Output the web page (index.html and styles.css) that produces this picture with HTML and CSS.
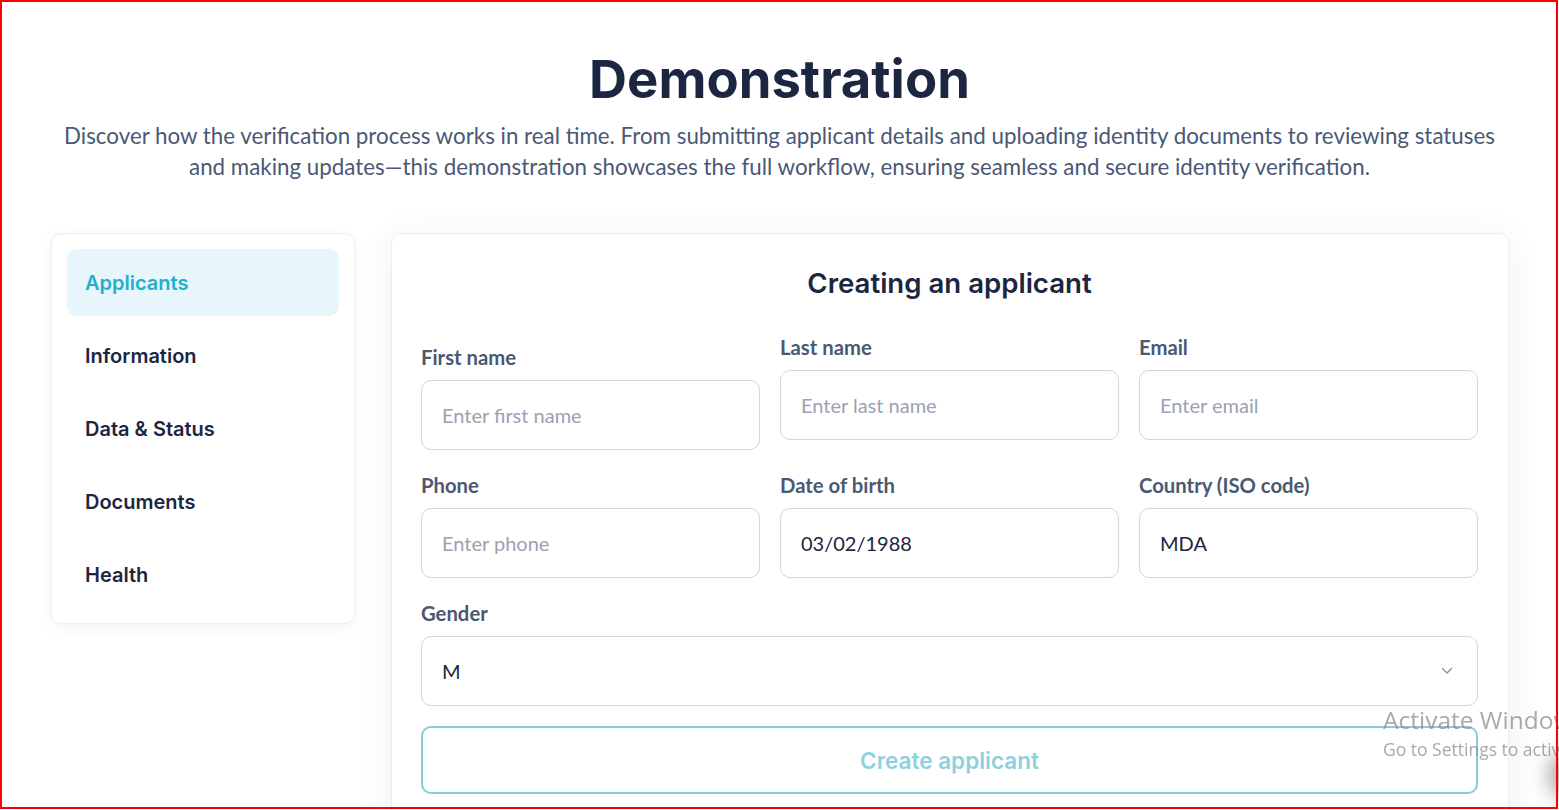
FILE: index.html
```html
<!DOCTYPE html>
<html lang="en">
<head>
<meta charset="utf-8">
<title>Demonstration</title>
<link rel="stylesheet" href="styles.css">
</head>
<body>
<header class="hero">
  <h1 class="hero-title">Demonstration</h1>
  <p class="hero-text">Discover how the verification process works in real time. From submitting applicant details and uploading identity documents to reviewing statuses and making updates—this demonstration showcases the full workflow, ensuring seamless and secure identity verification.</p>
</header>

<main class="demo">
  <nav class="side">
    <a class="side-item active">Applicants</a>
    <a class="side-item">Information</a>
    <a class="side-item">Data &amp; Status</a>
    <a class="side-item">Documents</a>
    <a class="side-item">Health</a>
  </nav>

  <section class="panel">
    <h2 class="panel-title">Creating an applicant</h2>
    <form class="form">
      <div class="field first">
        <label class="label">First name</label>
        <input class="input" type="text" placeholder="Enter first name">
      </div>
      <div class="field">
        <label class="label">Last name</label>
        <input class="input" type="text" placeholder="Enter last name">
      </div>
      <div class="field">
        <label class="label">Email</label>
        <input class="input" type="text" placeholder="Enter email">
      </div>
      <div class="field">
        <label class="label">Phone</label>
        <input class="input" type="text" placeholder="Enter phone">
      </div>
      <div class="field">
        <label class="label">Date of birth</label>
        <input class="input" type="text" value="03/02/1988">
      </div>
      <div class="field">
        <label class="label">Country (ISO code)</label>
        <input class="input" type="text" value="MDA">
      </div>
      <div class="field wide">
        <label class="label">Gender</label>
        <div class="select-wrap">
          <select class="input select">
            <option>M</option>
            <option>F</option>
          </select>
          <svg class="chevron" width="12" height="8" viewBox="0 0 12 8"><path d="M1.5 1.5 L6 6 L10.5 1.5" fill="none" stroke="#8a8f99" stroke-width="1.4" stroke-linecap="round" stroke-linejoin="round"/></svg>
        </div>
      </div>
      <button class="submit" type="button">Create applicant</button>
    </form>
  </section>
</main>

<div class="watermark">
  <div class="wm-title">Activate Windows</div>
  <div class="wm-sub">Go to Settings to activate Windows.</div>
</div>
<div class="corner-blob"></div>
<div class="frame"></div>
</body>
</html>
```

FILE: styles.css
```css
* { box-sizing: border-box; }

html, body {
  margin: 0;
  background: #ffffff;
  overflow: hidden;
}

body {
  font-family: "Lato", "Liberation Sans", sans-serif;
  color: #1c2640;
  height: 810px;
}

.hero {
  padding: 48px 30px 0;
  text-align: center;
}

.hero-title {
  margin: 0;
  font-family: "Inter", "Liberation Sans", sans-serif;
  font-weight: 700;
  font-size: 52.6px;
  line-height: 62px;
  color: #1c2640;
}

.hero-text {
  margin: 10px auto 0;
  max-width: 1460px;
  font-size: 22.35px;
  line-height: 31px;
  color: #4a5875;
}

.demo {
  display: flex;
  align-items: flex-start;
  gap: 36px;
  padding: 51px 50px 0 51px;
}

.side {
  flex: 0 0 304px;
  display: flex;
  flex-direction: column;
  gap: 6px;
  padding: 15px;
  background: #fff;
  border: 1px solid #eceef3;
  border-radius: 10px;
  box-shadow: 0 4px 16px rgba(30, 40, 90, 0.05);
}

.side-item {
  display: flex;
  align-items: center;
  height: 67px;
  padding: 1px 18px 0;
  border-radius: 10px;
  font-family: "Inter", "Liberation Sans", sans-serif;
  font-weight: 600;
  font-size: 20px;
  color: #1c2640;
  cursor: pointer;
}

.side-item.active {
  background: #e6f6fa;
  color: #22afd0;
}

.panel {
  flex: 1;
  height: 620px;
  padding: 32px 30px 0 29px;
  background: #fff;
  border: 1px solid #eceef3;
  border-radius: 10px;
  box-shadow: 0 4px 36px rgba(30, 40, 90, 0.07);
}

.panel-title {
  margin: 0 0 36px;
  text-align: center;
  font-family: "Inter", "Liberation Sans", sans-serif;
  font-weight: 600;
  font-size: 27.6px;
  line-height: 34px;
  color: #1c2640;
}

.form {
  display: grid;
  grid-template-columns: repeat(3, 1fr);
  column-gap: 20px;
  row-gap: 24px;
  align-items: start;
}

.field {
  display: flex;
  flex-direction: column;
}

.field.first {
  padding-top: 10px;
}

.field.wide {
  grid-column: 1 / -1;
}

.label {
  font-weight: 700;
  font-size: 20.3px;
  line-height: 22px;
  color: #4a5872;
  margin-bottom: 12px;
}

.input {
  height: 70px;
  width: 100%;
  padding: 0 20px;
  border: 1px solid #d3d6e0;
  border-radius: 10px;
  background: #fff;
  font-family: "Lato", "Liberation Sans", sans-serif;
  font-size: 20px;
  color: #1c2640;
  outline: none;
}

.input::placeholder {
  color: #9ba1b1;
}

.select-wrap {
  position: relative;
}

.select {
  appearance: none;
  -webkit-appearance: none;
}

.chevron {
  position: absolute;
  right: 25px;
  top: 31px;
  pointer-events: none;
}

.submit {
  grid-column: 1 / -1;
  margin-top: -4px;
  height: 68px;
  border: 2px solid #88ccd9;
  border-radius: 10px;
  background: #fff;
  font-family: "Inter", "Liberation Sans", sans-serif;
  font-weight: 600;
  font-size: 22.5px;
  color: #8fd0df;
}

.watermark {
  position: fixed;
  left: 1383px;
  top: 703px;
  white-space: nowrap;
  font-family: "Open Sans", "Noto Sans", sans-serif;
  color: rgba(140, 140, 140, 0.75);
  pointer-events: none;
}

.wm-title {
  font-size: 24.5px;
  line-height: 34px;
}

.wm-sub {
  font-size: 17.5px;
  line-height: 24px;
}

.corner-blob {
  position: fixed;
  left: 1548px;
  top: 750px;
  width: 50px;
  height: 50px;
  border-radius: 50%;
  background: rgba(40, 40, 40, 0.4);
  filter: blur(10px);
  pointer-events: none;
}

.frame {
  position: fixed;
  left: 0;
  top: 0;
  width: 1558px;
  height: 809px;
  border: 2px solid #ff0000;
  pointer-events: none;
}
```
